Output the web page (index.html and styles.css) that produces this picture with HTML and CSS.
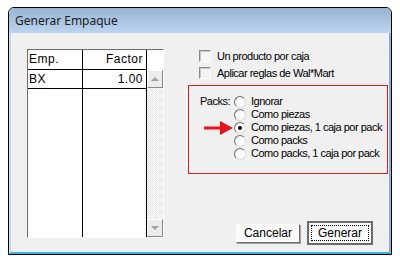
FILE: index.html
```html
<!DOCTYPE html>
<html lang="es">
<head>
<meta charset="UTF-8">
<title>Generar Empaque</title>
<link rel="stylesheet" href="styles.css">
</head>
<body>
<div class="window">
    <div class="titlebar">Generar Empaque</div>
    <div class="client">
        <div class="list">
            <div class="col col-emp">
                <div class="cell head">Emp.</div>
                <div class="cell">BX</div>
            </div>
            <div class="col col-factor">
                <div class="cell head">Factor</div>
                <div class="cell">1.00</div>
            </div>
            <div class="scrollbar">
                <div class="scroll-corner"></div>
                <div class="scroll-btn"><span class="tri up"></span></div>
                <div class="scroll-track"></div>
                <div class="scroll-btn"><span class="tri down"></span></div>
            </div>
        </div>
        <div class="side">
            <label class="check"><span class="box"></span>Un producto por caja</label>
            <label class="check"><span class="box"></span>Aplicar reglas de Wal*Mart</label>
            <div class="packs">
                <span class="packs-label">Packs:</span>
                <div class="options">
                    <div class="option"><span class="radio"></span>Ignorar</div>
                    <div class="option"><span class="radio"></span>Como piezas</div>
                    <div class="option"><span class="radio checked"></span>Como piezas, 1 caja por pack</div>
                    <div class="option"><span class="radio"></span>Como packs</div>
                    <div class="option"><span class="radio"></span>Como packs, 1 caja por pack</div>
                </div>
                <svg class="arrow" width="30" height="14" viewBox="0 0 30 14">
                    <rect x="0" y="5.5" width="18" height="3" fill="#e8141a"/>
                    <polygon points="16,0 29,7 16,14" fill="#e8141a"/>
                </svg>
            </div>
            <div class="actions">
                <button class="btn">Cancelar</button>
                <button class="btn default"><span class="focus">Generar</span></button>
            </div>
        </div>
    </div>
</div>
</body>
</html>
```

FILE: styles.css
```css
body {
    margin: 0;
    background-color: #fff;
    font-family: "Liberation Sans", Arial, sans-serif;
    color: #000;
}

.window {
    margin: 7px 0 0 8px;
    width: 384px;
    height: 248px;
    box-sizing: border-box;
    border: 1px solid #000;
    border-radius: 6px 6px 0 0;
    display: flex;
    flex-direction: column;
    overflow: hidden;
}

.titlebar {
    height: 25px;
    line-height: 25px;
    padding-left: 6px;
    background: linear-gradient(#98b3d4, #bcd5ef);
    font-family: "Noto Sans", sans-serif;
    font-size: 12px;
    color: #1b1b1b;
}

.client {
    flex: 1;
    display: flex;
    background-color: #f0f0f0;
    border-left: 2px solid #c4dbf2;
    border-right: 2px solid #86aede;
    border-bottom: 2px solid #3ab4e4;
    padding: 16px 0 0 16px;
}

/* lista */
.list {
    display: flex;
    width: 137px;
    height: 189px;
    box-sizing: border-box;
    border: 1px solid;
    border-color: #6e6e6e #fff #fff #6e6e6e;
    background-color: #fff;
    font-size: 12px;
}

.col {
    border-right: 1px solid #000;
}

.col-emp {
    width: 54px;
}

.col-factor {
    width: 63px;
    text-align: right;
}

.cell {
    height: 18px;
    line-height: 18px;
    border-bottom: 1px solid #000;
    padding: 0 3px 0 1px;
    letter-spacing: 0.5px;
}

.cell.head {
    height: 19px;
    line-height: 19px;
}

.scrollbar {
    width: 16px;
    display: flex;
    flex-direction: column;
}

.scroll-corner {
    height: 20px;
}

.scroll-btn {
    height: 18px;
    box-sizing: border-box;
    border: 1px solid;
    border-color: #fff #888 #888 #fff;
    background-color: #ececec;
    display: flex;
    align-items: center;
    justify-content: center;
}

.tri {
    width: 0;
    height: 0;
    border-left: 4px solid transparent;
    border-right: 4px solid transparent;
}

.tri.up {
    border-bottom: 4px solid #a0a0a0;
}

.tri.down {
    border-top: 4px solid #a0a0a0;
}

.scroll-track {
    flex: 1;
    background-color: #fff;
    background-image: conic-gradient(#e6e6e6 25%, #fff 0 50%, #e6e6e6 0 75%, #fff 0);
    background-size: 2px 2px;
}

/* lado derecho */
.side {
    width: 200px;
    margin-left: 24px;
    padding-top: 1px;
    display: flex;
    flex-direction: column;
    font-size: 11px;
    letter-spacing: -0.5px;
}

.check {
    display: flex;
    align-items: center;
    height: 12px;
    margin: 0 0 5px 11px;
}

.box {
    width: 12px;
    height: 12px;
    box-sizing: border-box;
    border: 1px solid;
    border-color: #8a8a8a #fff #fff #8a8a8a;
    box-shadow: inset 1px 1px #c8c8c8;
    background-color: #f4f4f4;
    margin-right: 6px;
}

.packs {
    position: relative;
    margin-top: 1px;
    height: 89px;
    box-sizing: border-box;
    border: 1px solid #e31b1b;
    padding: 9px 0 0 11px;
    display: flex;
}

.packs-label {
    width: 34px;
    height: 13px;
    line-height: 13px;
}

.options {
    display: flex;
    flex-direction: column;
}

.option {
    display: flex;
    align-items: center;
    height: 13px;
    line-height: 13px;
}

.radio {
    width: 12px;
    height: 12px;
    box-sizing: border-box;
    border-radius: 50%;
    border: 1px solid;
    border-color: #6e6e6e #dcdcdc #dcdcdc #6e6e6e;
    background: radial-gradient(circle at 65% 65%, #fff 45%, #e4e4e4);
    margin-right: 5px;
    display: flex;
    align-items: center;
    justify-content: center;
}

.radio.checked::after {
    content: "";
    width: 4px;
    height: 4px;
    border-radius: 50%;
    background-color: #000;
}

.arrow {
    position: absolute;
    left: 15px;
    top: 35px;
}

.actions {
    display: flex;
    justify-content: flex-end;
    align-items: center;
    gap: 7px;
    margin-top: 47px;
    padding-right: 15px;
}

.btn {
    font-family: "Liberation Sans", Arial, sans-serif;
    font-size: 12px;
    height: 19px;
    padding: 0 7px;
    box-sizing: border-box;
    border: 1px solid;
    border-color: #fff #6f6f6f #6f6f6f #fff;
    box-shadow: 1px 1px #a0a0a0;
    background-color: #fafafa;
    color: #000;
}

.btn.default {
    height: 24px;
    padding: 2px;
    border: 2px solid #6c6c6c;
    box-shadow: none;
    background-color: #fafafa;
}

.focus {
    display: block;
    height: 16px;
    line-height: 14px;
    box-sizing: border-box;
    border: 1px dotted #000;
    padding: 0 6px;
}
```
